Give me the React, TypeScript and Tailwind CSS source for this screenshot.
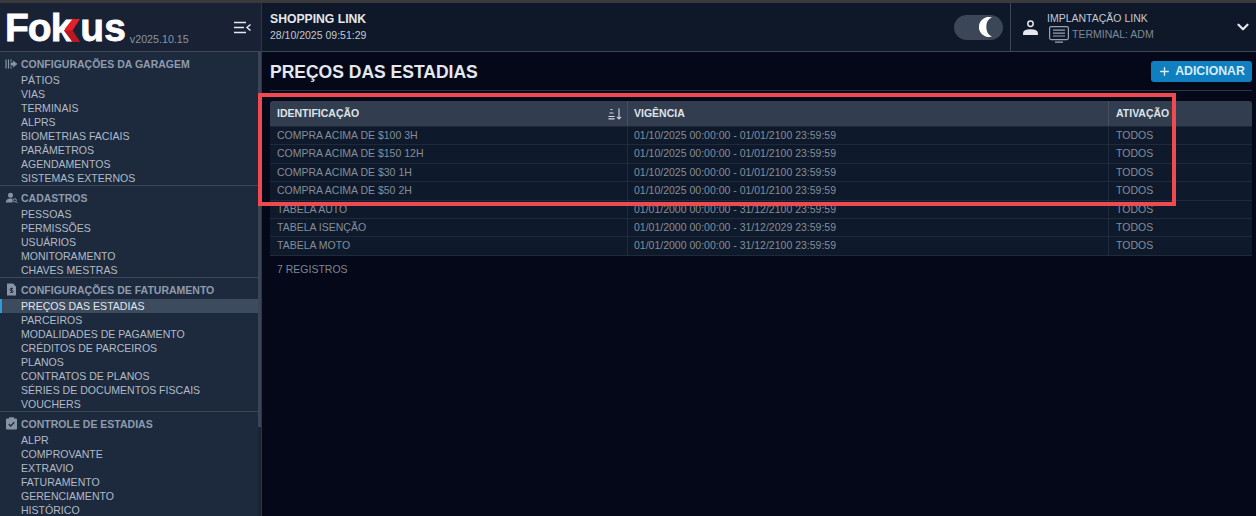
import React from "react";
import { Plus, ChevronDown } from "lucide-react";

const groups = [
  { title: "CONFIGURAÇÕES DA GARAGEM", icon: "garage", items: ["PÁTIOS", "VIAS", "TERMINAIS", "ALPRS", "BIOMETRIAS FACIAIS", "PARÂMETROS", "AGENDAMENTOS", "SISTEMAS EXTERNOS"] },
  { title: "CADASTROS", icon: "people", items: ["PESSOAS", "PERMISSÕES", "USUÁRIOS", "MONITORAMENTO", "CHAVES MESTRAS"] },
  { title: "CONFIGURAÇÕES DE FATURAMENTO", icon: "bill", items: ["PREÇOS DAS ESTADIAS", "PARCEIROS", "MODALIDADES DE PAGAMENTO", "CRÉDITOS DE PARCEIROS", "PLANOS", "CONTRATOS DE PLANOS", "SÉRIES DE DOCUMENTOS FISCAIS", "VOUCHERS"] },
  { title: "CONTROLE DE ESTADIAS", icon: "check", items: ["ALPR", "COMPROVANTE", "EXTRAVIO", "FATURAMENTO", "GERENCIAMENTO", "HISTÓRICO"] },
];

const rows = [
  ["COMPRA ACIMA DE $100 3H", "01/10/2025 00:00:00 - 01/01/2100 23:59:59"],
  ["COMPRA ACIMA DE $150 12H", "01/10/2025 00:00:00 - 01/01/2100 23:59:59"],
  ["COMPRA ACIMA DE $30 1H", "01/10/2025 00:00:00 - 01/01/2100 23:59:59"],
  ["COMPRA ACIMA DE $50 2H", "01/10/2025 00:00:00 - 01/01/2100 23:59:59"],
  ["TABELA AUTO", "01/01/2000 00:00:00 - 31/12/2100 23:59:59"],
  ["TABELA ISENÇÃO", "01/01/2000 00:00:00 - 31/12/2029 23:59:59"],
  ["TABELA MOTO", "01/01/2000 00:00:00 - 31/12/2100 23:59:59"],
];

function GroupIcon({ kind }: { kind: string }) {
  const c = "#8794a6";
  if (kind === "garage")
    return (
      <svg width="13" height="12" viewBox="0 0 13 12" fill="none" stroke={c} strokeWidth="1.2">
        <path d="M1 1.500v9M3.500 1.500v9" />
        <path d="M6 1.500v2M6 8.500v2" />
        <path d="M5.500 4.500h2.500V2.500L12.500 6 8 9.500v-2H5.500z" fill={c} stroke="none" />
      </svg>
    );
  if (kind === "people")
    return (
      <svg width="13" height="12" viewBox="0 0 13 12" fill={c}>
        <circle cx="5.500" cy="3.200" r="2.500" />
        <path d="M.8 10.500c0-2.800 2-4 4.700-4 .8 0 1.400.1 2 .3V10.500z" />
        <circle cx="9.800" cy="8.300" r="1.600" fill="none" stroke={c} strokeWidth="1" />
        <path d="M11 9.500l1.500 1.500" stroke={c} strokeWidth="1" />
      </svg>
    );
  if (kind === "bill")
    return (
      <svg width="13" height="13" viewBox="0 0 13 13">
        <path d="M2 .5h6l3 3v9H2z" fill={c} />
        <path d="M6.500 4.500v5M8 5.500H5.800a1 1 0 000 2h1.400a1 1 0 010 2H5" stroke="#1e2a3c" strokeWidth="0.900" fill="none" />
      </svg>
    );
  return (
    <svg width="13" height="13" viewBox="0 0 13 13">
      <rect x="1" y="1.500" width="11" height="11" rx="1" fill={c} />
      <rect x="4" y="0.300" width="5" height="2.400" rx="0.600" fill={c} />
      <path d="M3.700 7l2 2 3.600-3.800" stroke="#1e2a3c" strokeWidth="1.300" fill="none" />
    </svg>
  );
}

function Logo() {
  return (
    <div className="flex items-end h-[34px] mt-[2px] text-white">
      <span className="text-[39px] leading-[34px] font-bold tracking-[-1px] [-webkit-text-stroke:0.8px_white]">Fok</span>
      <svg width="17" height="23" viewBox="0 0 17 23" className="-ml-[8px] mb-[3px] relative shrink-0">
        <path d="M9.500 0H17L9.500 11.500 17 23H9.500L1 11.500z" fill="#e3202a" />
        <path d="M9.500 23H17L9.500 11.500H1z" fill="#b81822" />
      </svg>
      <span className="text-[39px] leading-[34px] font-bold [-webkit-text-stroke:0.8px_white]">us</span>
    </div>
  );
}

export default function App() {
  return (
    <div className="relative w-[1256px] h-[516px] overflow-hidden bg-[#040818] font-['Liberation_Sans',sans-serif] flex flex-col">
      <div className="h-[3px] shrink-0 bg-[#3a3a3c]" />
      <div className="flex flex-1 min-h-0">
        {/* Sidebar */}
        <aside className="w-[262px] shrink-0 flex flex-col border-r border-[#2b3646]">
          <div className="h-[49px] shrink-0 bg-[#182234] border-b border-[#3c4858] flex items-center pl-[5px] pr-[9px]">
            <Logo />
            <span className="text-[10.700px] text-[#8b94a1] self-end mb-[5px] ml-[4px] leading-[14px]">v2025.10.15</span>
            <svg width="17" height="13" viewBox="0 0 17 13" className="ml-auto mr-[1px]" fill="none" stroke="#e5e7eb" strokeWidth="1.500">
              <path d="M0 1.500h12M0 6.500h10M0 11.500h12M16.500 3.500L13 6.500l3.500 3" />
            </svg>
          </div>
          <div className="flex flex-1 min-h-0 overflow-hidden">
            <div className="w-[258px] bg-[#1d2a3e] overflow-hidden">
              {groups.map((g, i) => (
                <div key={g.title} className={i === 0 ? "" : "border-t border-[#3c4858]"}>
                  <div className="flex items-center h-[17px] mt-[4px] pb-[2px]">
                    <span className="w-[21px] pl-[5px] flex items-center"><GroupIcon kind={g.icon} /></span>
                    <span className="text-[10.500px] font-bold text-[#8f9bac] leading-[14px]">{g.title}</span>
                  </div>
                  <ul>
                    {g.items.map((it) => {
                      const active = it === "PREÇOS DAS ESTADIAS";
                      return (
                        <li
                          key={it}
                          className={`h-[14px] leading-[14px] text-[10.560px] pl-[21px] relative ${active ? "bg-[#3d4b5e] text-[#e2e6ec]" : "text-[#b2bac6]"}`}
                        >
                          {active && <span className="absolute left-0 top-0 bottom-0 w-[2px] bg-[#2f9bd8]" />}
                          {it}
                        </li>
                      );
                    })}
                  </ul>
                </div>
              ))}
            </div>
            <div className="w-[3px] bg-[#1a2534]">
              <div className="h-[375px] bg-[#3a4656]" />
            </div>
          </div>
        </aside>

        {/* Main */}
        <div className="flex-1 min-w-0 flex flex-col">
          <header className="h-[49px] shrink-0 bg-[#0f1829] border-b border-[#3c4858] flex items-center">
            <div className="pl-[8px] flex flex-col">
              <span className="text-[12.200px] font-bold text-[#e5e7eb] leading-[15px]">SHOPPING LINK</span>
              <span className="text-[10.500px] text-[#c3c9d2] leading-[14px] mt-[1px]">28/10/2025 09:51:29</span>
            </div>
            <div className="ml-auto mr-[7px] w-[49px] h-[25px] rounded-full bg-[#3b4657] flex items-center justify-end pr-[8px]">
              <svg width="16" height="20" viewBox="0 0 16 20">
                <path d="M13 0.500A10 10 0 1 0 13 19.500 A7.500 9.800 0 0 1 13 0.500z" fill="#ffffff" />
              </svg>
            </div>
            <div className="w-[246px] h-full border-l border-[#3c4858] flex items-center pl-[12px] pr-[5px]">
              <svg width="15" height="15" viewBox="0 0 15 15" fill="none" stroke="#e5e7eb" strokeWidth="1.500" className="shrink-0">
                <circle cx="7.500" cy="3.800" r="2.700" />
                <path d="M.8 14.200v-1c0-2 2.500-3.200 6.700-3.200s6.700 1.200 6.700 3.200v1z" fill="#e5e7eb" />
              </svg>
              <div className="ml-[9px] flex flex-col">
                <span className="text-[10.500px] text-[#c3c9d2] leading-[14px] -mt-[1px]">IMPLANTAÇÃO LINK</span>
                <div className="flex items-center gap-[3px] mt-[1px] ml-[2px]">
                  <svg width="20" height="17" viewBox="0 0 20 17" fill="none" stroke="#98a2b0" strokeWidth="1.200">
                    <rect x="0.600" y="0.600" width="18.800" height="13" rx="1.500" />
                    <path d="M4 4.200h12M4 7.100h12M4 10h12M6 16.200h8" />
                  </svg>
                  <span className="text-[10.500px] text-[#7e8897] leading-[14px]">TERMINAL: ADM</span>
                </div>
              </div>
              <ChevronDown size={18} className="ml-auto -mr-[1px] text-[#e5e7eb]" strokeWidth={3} />
            </div>
          </header>

          <main className="flex-1 min-h-0 pl-[8px] pr-[4px]">
            <div className="h-[39px] flex items-center justify-between border-b border-[#2d3543]">
              <h1 className="text-[17.500px] font-bold text-[#e5e8ee] leading-[22px] mt-[1px]">PREÇOS DAS ESTADIAS</h1>
              <button className="w-[101px] h-[21px] rounded-[3px] bg-[#0f7fc0] flex items-center justify-center gap-[4px] text-[12.300px] font-bold text-[#d8ebf7] mt-[1px]">
                <Plus size={13} strokeWidth={2.500} />
                ADICIONAR
              </button>
            </div>

            <div className="mt-[10px] text-[10.500px]">
              <div className="grid grid-cols-[358px_481px_143px] h-[26px] rounded-t-[3px] bg-[#323e50] text-[#dfe3e9] font-bold border-b border-[#1e2838]">
                <div className="flex items-center justify-between pl-[7px] pr-[4px] border-r border-[#46515f]">
                  IDENTIFICAÇÃO
                  <svg width="15" height="12" viewBox="0 0 15 12" fill="none" stroke="#d5dae2" strokeWidth="1.100">
                    <path d="M2.500 1.500h2M1.500 5h4M.5 8.500h6M.5 10.900h6" />
                    <path d="M11 .5v10.500M9 8.800l2 2.200 2-2.200" />
                  </svg>
                </div>
                <div className="flex items-center pl-[6px] border-r border-[#46515f]">VIGÊNCIA</div>
                <div className="flex items-center pl-[7px]">ATIVAÇÃO</div>
              </div>
              {rows.map((r) => (
                <div key={r[0]} className="grid grid-cols-[358px_481px_143px] h-[18.400px] bg-[#0e1a2b] text-[#858d99] border-b border-[#1f2b3b] leading-[17.400px]">
                  <div className="pl-[7px] border-r border-[#1f2b3b]">{r[0]}</div>
                  <div className="pl-[6px] border-r border-[#1f2b3b]">{r[1]}</div>
                  <div className="pl-[7px]">TODOS</div>
                </div>
              ))}
              <div className="mt-[6px] pl-[7px] text-[#7d8795] leading-[14px]">7 REGISTROS</div>
            </div>
          </main>
        </div>
      </div>

      {/* red highlight annotation */}
      <div className="absolute left-[258px] top-[93px] w-[918px] h-[112.500px] border-[4px] border-[#ef4a4f] pointer-events-none" />
    </div>
  );
}
